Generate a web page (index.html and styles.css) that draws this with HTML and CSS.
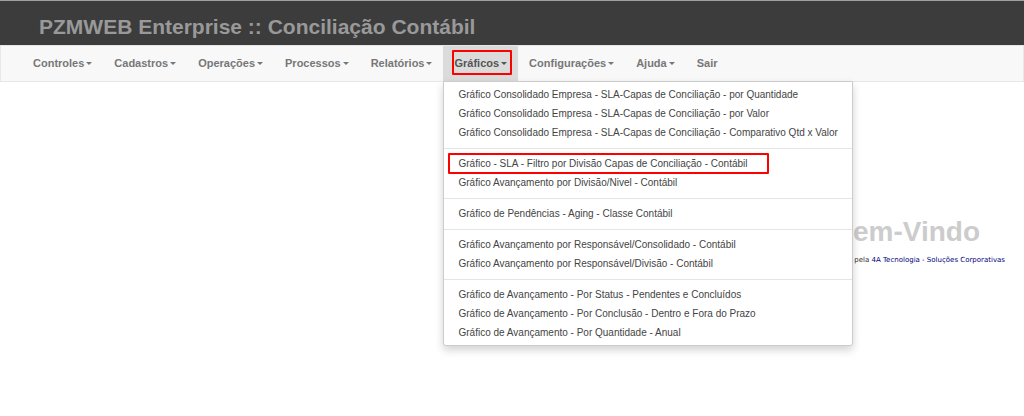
FILE: index.html
```
<!DOCTYPE html>
<html lang="pt-BR">
<head>
    <meta charset="UTF-8">
    <meta name="viewport" content="width=device-width, initial-scale=1.0">
    <title>PZMWEB Enterprise</title>
    <link rel="stylesheet" href="styles.css">
</head>
<body>

<header class="header">
    <h1 class="title">PZMWEB Enterprise :: Conciliação Contábil</h1>
</header>

<nav class="navbar">
    <ul class="nav">
        <li><a class="nav-link" href="#">Controles<span class="caret"></span></a></li>
        <li><a class="nav-link" href="#">Cadastros<span class="caret"></span></a></li>
        <li><a class="nav-link" href="#">Operações<span class="caret"></span></a></li>
        <li><a class="nav-link" href="#">Processos<span class="caret"></span></a></li>
        <li><a class="nav-link" href="#">Relatórios<span class="caret"></span></a></li>
        <li class="dropdown open">
            <a class="nav-link marked" href="#">Gráficos<span class="caret"></span></a>
            <ul class="menu">
                <li><a class="menu-link" href="#">Gráfico Consolidado Empresa - SLA-Capas de Conciliação - por Quantidade</a></li>
                <li><a class="menu-link" href="#">Gráfico Consolidado Empresa - SLA-Capas de Conciliação - por Valor</a></li>
                <li><a class="menu-link" href="#">Gráfico Consolidado Empresa - SLA-Capas de Conciliação - Comparativo Qtd x Valor</a></li>
                <li class="divider"></li>
                <li><a class="menu-link marked" href="#">Gráfico - SLA - Filtro por Divisão Capas de Conciliação - Contábil</a></li>
                <li><a class="menu-link" href="#">Gráfico Avançamento por Divisão/Nivel - Contábil</a></li>
                <li class="divider"></li>
                <li><a class="menu-link" href="#">Gráfico de Pendências - Aging - Classe Contábil</a></li>
                <li class="divider"></li>
                <li><a class="menu-link" href="#">Gráfico Avançamento por Responsável/Consolidado - Contábil</a></li>
                <li><a class="menu-link" href="#">Gráfico Avançamento por Responsável/Divisão - Contábil</a></li>
                <li class="divider"></li>
                <li><a class="menu-link" href="#">Gráfico de Avançamento - Por Status - Pendentes e Concluídos</a></li>
                <li><a class="menu-link" href="#">Gráfico de Avançamento - Por Conclusão - Dentro e Fora do Prazo</a></li>
                <li><a class="menu-link" href="#">Gráfico de Avançamento - Por Quantidade - Anual</a></li>
            </ul>
        </li>
        <li><a class="nav-link" href="#">Configurações<span class="caret"></span></a></li>
        <li><a class="nav-link" href="#">Ajuda<span class="caret"></span></a></li>
        <li><a class="nav-link" href="#">Sair</a></li>
    </ul>
</nav>

<main class="welcome">
    <h2 class="welcome-title">Bem-Vindo</h2>
    <p class="credits">pela <a class="credits-link" href="#">4A Tecnologia - Soluções Corporativas</a></p>
</main>

</body>
</html>
```
FILE: styles.css
```
body {
    margin: 0;
    min-height: 100vh;
    font-family: "Liberation Sans", Arial, sans-serif;
    background-color: #fff;
}
ul {
    margin: 0;
    padding: 0;
    list-style: none;
}
a {
    text-decoration: none;
}
.header {
    padding: 13px 39px 5px;
    border-top: 1px solid #a0a0a0;
    background-color: #3c3c3c;
}
.title {
    margin: 0;
    font-size: 21px;
    line-height: 26px;
    color: #999;
}
.navbar {
    padding-left: 21px;
    border: 1px solid #e7e7e7;
    background-color: #f8f8f8;
}
.nav {
    display: flex;
}
.nav-link {
    display: flex;
    align-items: center;
    padding: 0 11px;
    font-size: 11px;
    font-weight: bold;
    line-height: 35px;
    color: #777;
}
.caret {
    margin-left: 2px;
    border-top: 3px solid;
    border-left: 3px solid transparent;
    border-right: 3px solid transparent;
}
.dropdown {
    position: relative;
}
.open .nav-link {
    color: #555;
    background-color: #dbdbdb;
}
.marked {
    position: relative;
}
/* red highlight box */
.marked::after {
    content: "";
    position: absolute;
    border: 2px solid #f00;
    border-radius: 1px;
}
.nav-link.marked::after {
    inset: 4px 6px 6px 9px;
}
.menu {
    position: absolute;
    top: 100%;
    left: 0;
    z-index: 10;
    padding: 3px 0;
    border: 1px solid #ccc;
    border-radius: 0 0 3px 3px;
    background-color: #fff;
    box-shadow: 0 4px 9px rgba(0, 0, 0, 0.18);
}
.menu-link {
    display: block;
    padding: 0 14px;
    font-size: 10px;
    line-height: 19px;
    white-space: nowrap;
    color: #444;
}
.menu-link.marked::after {
    inset: -1px 83px -1px 4px;
}
.divider {
    height: 1px;
    margin: 6px 0 5px;
    background-color: #e5e5e5;
}
.welcome {
    display: flex;
    flex-direction: column;
    align-items: flex-end;
    padding: 134px 19px 0;
}
.welcome-title {
    margin: 0;
    padding-right: 25px;
    font-size: 28px;
    line-height: 32px;
    color: #ccc;
}
.credits {
    margin: 6px 0 0;
    font-family: "DejaVu Sans", Verdana, sans-serif;
    font-size: 7px;
    line-height: 12px;
    color: #333;
}
.credits-link {
    color: #000080;
}
```
